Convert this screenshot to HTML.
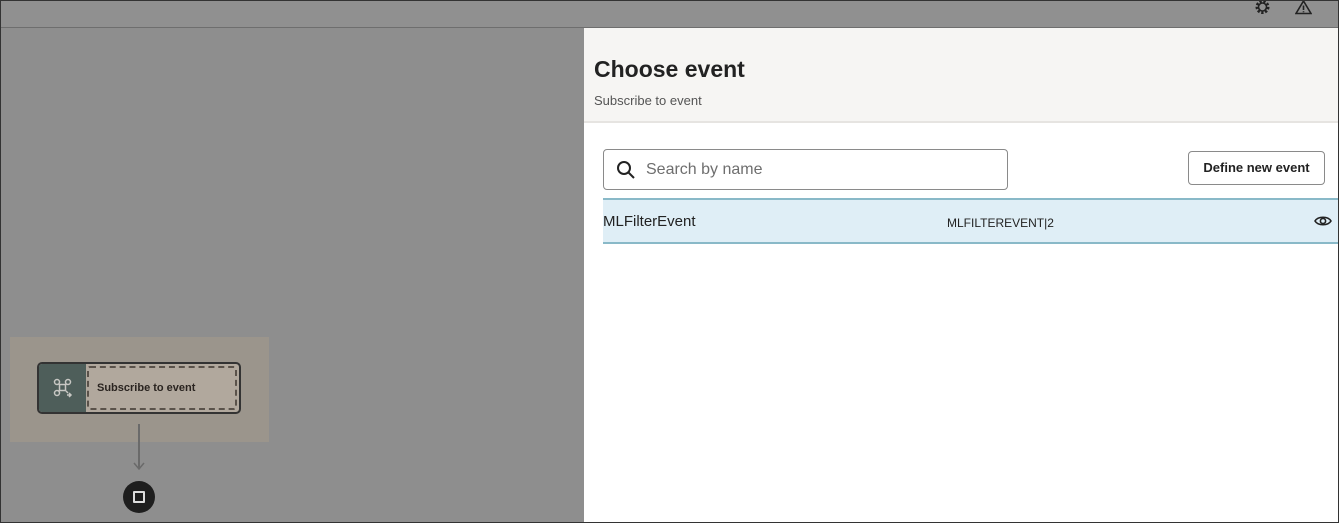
<!DOCTYPE html>
<html><head><meta charset="utf-8"><style>
*{box-sizing:border-box;margin:0;padding:0}
body{width:1339px;height:523px;overflow:hidden;background:#8e8e8e;font-family:"Liberation Sans",sans-serif;position:relative}
.frame{position:absolute;inset:0;border:1px solid #333;pointer-events:none;z-index:10}
.topbar{position:absolute;left:0;top:0;width:1339px;height:28px;background:#909090;border-bottom:1px solid #6e6e6e}
.panel{position:absolute;left:584px;top:28px;width:755px;height:495px;background:#fff}
.hdr{height:95px;background:#f6f5f3;border-bottom:2px solid #e6e4e1;padding:28px 0 0 10px}
.hdr h1{font-size:23px;font-weight:bold;color:#222}
.hdr p{font-size:13px;color:#555;margin-top:10px}
.search{position:absolute;left:19px;top:121px;width:405px;height:41px;border:1px solid #8a8a8a;border-radius:4px}
.search span{position:absolute;left:42px;top:11px;font-size:16px;color:#6e6e6e}
.btn{position:absolute;left:604px;top:123px;width:137px;height:34px;border:1px solid #8a8a8a;border-radius:4px;font-size:13px;color:#222;text-align:center;line-height:32px;font-weight:bold}
.row{position:absolute;left:19px;top:170px;width:736px;height:46px;background:#dfeef6;border-top:2px solid #89b9c8;border-bottom:2px solid #89b9c8}
.row .a{position:absolute;left:0;top:13px;font-size:15px;color:#222}
.row .b{position:absolute;left:344px;top:16px;font-size:12px;color:#222}
.node-bg{position:absolute;left:10px;top:337px;width:259px;height:105px;background:#9b958c}
.node{position:absolute;left:37px;top:362px;width:204px;height:52px;border:2px solid #333;border-radius:5px;background:#b1a89d;overflow:hidden}
.node .ic{position:absolute;left:0;top:0;width:47px;height:48px;background:#4e5e5a}
.node .in{position:absolute;left:48px;top:2px;right:2px;bottom:2px;border:2px dashed #5a524a;border-radius:3px}
.node .t{position:absolute;left:58px;top:18px;font-size:11px;font-weight:bold;color:#2a2420}
</style></head><body>
<div class="topbar">
<svg style="position:absolute;left:1254px;top:0" width="17" height="15" viewBox="0 0 17 15"><circle cx="8.5" cy="7" r="5.5" fill="none" stroke="#222" stroke-width="3" stroke-dasharray="2.2 1.6"/><circle cx="8.5" cy="7" r="4" fill="none" stroke="#222" stroke-width="1.6"/></svg>
<svg style="position:absolute;left:1295px;top:0" width="17" height="15" viewBox="0 0 17 15"><path d="M8.5 1 L16 13.5 H1 Z" fill="none" stroke="#222" stroke-width="1.6"/><path d="M8.5 5.5V10M8.5 11.3v1" stroke="#222" stroke-width="1.6"/></svg>
</div>
<div class="node-bg"></div>
<div class="node"><div class="ic"><svg width="47" height="48" viewBox="0 0 47 48"><g fill="none" stroke="#c8c8c4" stroke-width="1.5"><circle cx="18" cy="18" r="2.5"/><circle cx="29" cy="18" r="2.5"/><circle cx="18" cy="29" r="2.5"/><rect x="20.5" y="20.5" width="6" height="6"/><path d="M20 20l1 1M27 20l-1 1M20 27l1-1M27 27l2 2M28 31h4M30 29l2 2-2 2"/></g></svg></div><div class="in"></div><div class="t">Subscribe to event</div></div>
<div style="position:absolute;left:138px;top:424px;width:2px;height:44px;background:#6a6a6a"></div>
<svg style="position:absolute;left:133px;top:462px" width="12" height="9"><path d="M1 1l5 6 5-6" fill="none" stroke="#6a6a6a" stroke-width="1.5"/></svg>
<div style="position:absolute;left:123px;top:481px;width:32px;height:32px;border-radius:50%;background:#1e1e1e"></div>
<div style="position:absolute;left:133px;top:491px;width:12px;height:12px;border:2px solid #ddd;border-radius:1px"></div>
<div class="panel">
<div class="hdr"><h1>Choose event</h1><p>Subscribe to event</p></div>
<div class="search"><svg style="position:absolute;left:12px;top:10px" width="20" height="20" viewBox="0 0 20 20"><circle cx="8" cy="8" r="6" fill="none" stroke="#222" stroke-width="2"/><path d="M12.5 12.5L18 18" stroke="#222" stroke-width="2"/></svg><span>Search by name</span></div>
<div class="btn">Define new event</div>
<div class="row"><span class="a">MLFilterEvent</span><span class="b">MLFILTEREVENT|2</span>
<svg style="position:absolute;left:711px;top:14px" width="18" height="14" viewBox="0 0 18 14"><path d="M1 7C4 2 14 2 17 7C14 12 4 12 1 7Z" fill="none" stroke="#222" stroke-width="1.6"/><circle cx="9" cy="7" r="2.6" fill="none" stroke="#222" stroke-width="1.6"/></svg></div>
</div>
<div class="frame"></div>
</body></html>
